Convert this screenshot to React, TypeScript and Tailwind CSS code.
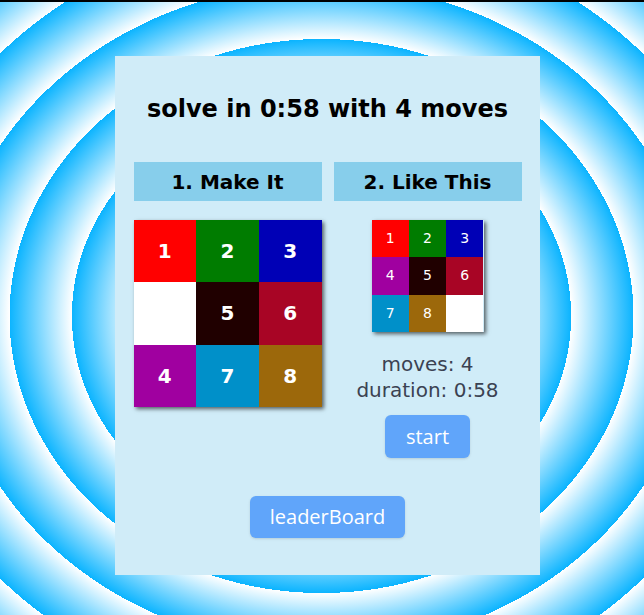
import React from "react";

const big = [
  { n: "1", c: "bg-[#ff0000]" },
  { n: "2", c: "bg-[#007c00]" },
  { n: "3", c: "bg-[#0000b6]" },
  { n: "", c: "bg-white" },
  { n: "5", c: "bg-[#200000]" },
  { n: "6", c: "bg-[#a80525]" },
  { n: "4", c: "bg-[#a000a0]" },
  { n: "7", c: "bg-[#0090c9]" },
  { n: "8", c: "bg-[#9c680b]" },
];

const small = [
  { n: "1", c: "bg-[#ff0000]" },
  { n: "2", c: "bg-[#007c00]" },
  { n: "3", c: "bg-[#0000b6]" },
  { n: "4", c: "bg-[#a000a0]" },
  { n: "5", c: "bg-[#200000]" },
  { n: "6", c: "bg-[#a80525]" },
  { n: "7", c: "bg-[#0090c9]" },
  { n: "8", c: "bg-[#9c680b]" },
  { n: "", c: "bg-white" },
];

export default function App() {
  return (
    <div className="w-[644px] h-[615px] overflow-hidden border-t-2 border-black bg-[repeating-radial-gradient(ellipse_62.4px_55.4px_at_321.5px_314px,#ffffff_0%,#0bb4ff_100%)] font-['DejaVu_Sans',sans-serif]">
      <div className="ml-[115px] mt-[54px] w-[425px] h-[519px] bg-[#d0ecf8] flex flex-col items-center pt-[37px]">
        <h2 className="text-[24px] leading-[32px] font-bold text-black">solve in 0:58 with 4 moves</h2>
        <div className="mt-[37px] grid grid-cols-[188px_188px] gap-x-[12px]">
          <div className="h-[39px] bg-[#87ceeb] flex items-center justify-center text-[20px] font-bold text-black">1. Make It</div>
          <div className="h-[39px] bg-[#87ceeb] flex items-center justify-center text-[20px] font-bold text-black">2. Like This</div>
          <div className="mt-[19px]">
            <div className="grid grid-cols-3 w-[188px] h-[187px] shadow-[2px_2px_4px_rgba(0,0,0,0.6)]">
              {big.map((t, i) => (
                <div key={i} className={`${t.c} flex items-center justify-center text-white font-bold text-[20px]`}>{t.n}</div>
              ))}
            </div>
          </div>
          <div className="mt-[19px] flex flex-col items-center">
            <div className="grid grid-cols-3 w-[112px] h-[112px] shadow-[2px_2px_4px_rgba(0,0,0,0.6)]">
              {small.map((t, i) => (
                <div key={i} className={`${t.c} flex items-center justify-center text-white text-[14px]`}>{t.n}</div>
              ))}
            </div>
            <div className="mt-[19px] text-[20px] leading-[26px] text-[#3b4252] text-center">
              <div>moves: 4</div>
              <div>duration: 0:58</div>
            </div>
            <button className="mt-[12px] h-[43px] px-[21px] rounded-[6px] bg-[#60a5fa] text-white text-[20px] font-['Open_Sans',sans-serif] shadow-sm">start</button>
          </div>
        </div>
        <button className="mt-[38px] h-[42px] px-[20px] rounded-[6px] bg-[#60a5fa] text-white text-[20px] font-['Open_Sans',sans-serif] shadow-sm">leaderBoard</button>
      </div>
    </div>
  );
}
